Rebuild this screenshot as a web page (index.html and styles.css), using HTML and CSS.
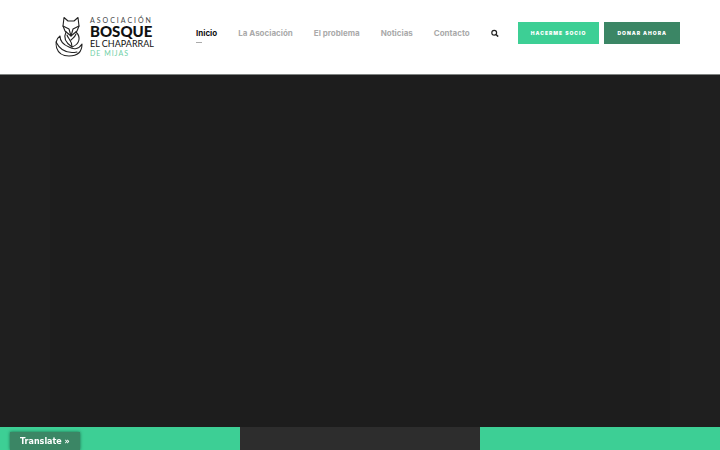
FILE: index.html
```html
<!DOCTYPE html>
<html lang="es">

<head>
    <meta charset="utf-8">
    <title>Asociación Bosque El Chaparral de Mijas</title>
    <link rel="stylesheet" href="styles.css">
</head>

<body>
    <header class="header">
        <a href="#" class="logo">
            <svg class="fox" viewBox="0 0 28 42" fill="none" stroke="#222" stroke-width="1.1" stroke-linejoin="round" stroke-linecap="round" aria-hidden="true">
                <path d="M9 1.5 L13 5 H19 L23 1.5 L24 10 L22 15 L16 20 L10 15 L8 10 Z" />
                <path d="M8 10 L14 13 L16 20 L18 13 L24 10" />
                <path d="M11 16 C8 22 11 27 17 31 C25 28 26 21 21 16" />
                <path d="M12 19 C13 23 17 24 17 31 M21 18 C20 21 18 22 16 24" />
                <path d="M5 20 C-2 25 0 40 14 40 C22 40 27 36 27 28 C24 33 19 34 14 31 C9 29 5 26 5 20 Z" />
                <path d="M1 26 C5 34 12 38 22 36" />
            </svg>
            <span class="logo-text">
                <span class="logo-top">ASOCIACIÓN</span>
                <strong class="logo-name">BOSQUE</strong>
                <span class="logo-place">EL CHAPARRAL</span>
                <span class="logo-town">DE MIJAS</span>
            </span>
        </a>
        <nav class="nav">
            <a href="#" class="active">Inicio</a>
            <a href="#">La Asociación</a>
            <a href="#">El problema</a>
            <a href="#">Noticias</a>
            <a href="#">Contacto</a>
            <button type="button" class="search" aria-label="Buscar">
                <svg viewBox="0 0 8 8" fill="none" stroke="#222" aria-hidden="true">
                    <circle cx="3.2" cy="3.7" r="2.4" stroke-width="1.2" />
                    <path d="M5 5.5 L7.2 7.6" stroke-width="1.5" />
                </svg>
            </button>
        </nav>
        <div class="actions">
            <button type="button" class="btn">HACERME SOCIO</button>
            <button type="button" class="btn btn-dark">DONAR AHORA</button>
        </div>
    </header>

    <main class="hero">
        <div class="slide"></div>
    </main>

    <section class="columns">
        <div class="column"></div>
        <div class="column column-dark"></div>
        <div class="column"></div>
    </section>

    <button type="button" class="translate">Translate »</button>
</body>

</html>
```
FILE: styles.css
```css
* {
    box-sizing: border-box;
}

body {
    display: flex;
    flex-direction: column;
    min-height: 100vh;
    margin: 0;
    background-color: #fff;
    font-family: Inter, "Open Sans", sans-serif;
}

a {
    color: inherit;
    text-decoration: none;
}

button {
    border: 0;
    padding: 0;
    font-family: inherit;
    cursor: pointer;
}

.header {
    display: flex;
    align-items: flex-start;
    padding: 16px 40px 16px 55px;
}

.logo {
    display: flex;
    gap: 7px;
    width: 141px;
    color: #111;
    font-family: Lato, sans-serif;
    white-space: nowrap;
}

.fox {
    width: 28px;
    height: 42px;
}

.logo-text {
    display: flex;
    flex-direction: column;
}

.logo-top {
    color: #444;
    font-size: 7px;
    letter-spacing: 2px;
    line-height: 9px;
}

.logo-name {
    font-size: 15px;
    font-weight: 900;
    line-height: 13px;
}

.logo-place {
    font-size: 9px;
    line-height: 11px;
}

.logo-town {
    color: #6fcfa5;
    font-size: 7px;
    letter-spacing: 1px;
    line-height: 9px;
}

.nav {
    display: flex;
    flex: 1;
    gap: 21px;
    padding-top: 11px;
    color: #aaa;
    font-size: 8px;
    font-weight: 700;
    line-height: 12px;
    white-space: nowrap;
}

.nav .active {
    color: #111;
}

.nav .active::after {
    content: "";
    display: block;
    width: 6px;
    height: 1px;
    margin-top: 3px;
    background-color: #aaa;
}

.search {
    height: 12px;
    background: none;
}

.search svg {
    display: block;
    width: 8px;
    height: 8px;
}

.actions {
    display: flex;
    gap: 5px;
    padding-top: 6px;
}

.btn {
    height: 22px;
    padding: 0 13px;
    background-color: #3dcf95;
    color: #fff;
    font-size: 5px;
    font-weight: 900;
    letter-spacing: 1px;
}

.btn-dark {
    background-color: #3b8665;
}

.hero {
    display: flex;
    flex: 1;
    padding: 0 50px;
    border-top: 1px solid #7f8381;
    background-color: #1f1f1f;
}

.slide {
    flex: 1;
    background-color: #1d1d1d;
}

.columns {
    display: grid;
    grid-template-columns: repeat(3, 1fr);
}

.column {
    height: 23px;
    background-color: #3dcf95;
}

.column-dark {
    background-color: #2d2d2d;
}

.translate {
    position: fixed;
    bottom: 0;
    left: 10px;
    height: 18px;
    padding: 2px 10px 0;
    background-color: #3b8665;
    box-shadow: 0 0 3px rgba(0, 0, 0, .5);
    color: #fff;
    font: bold 8px/16px "DejaVu Sans", sans-serif;
}
```
